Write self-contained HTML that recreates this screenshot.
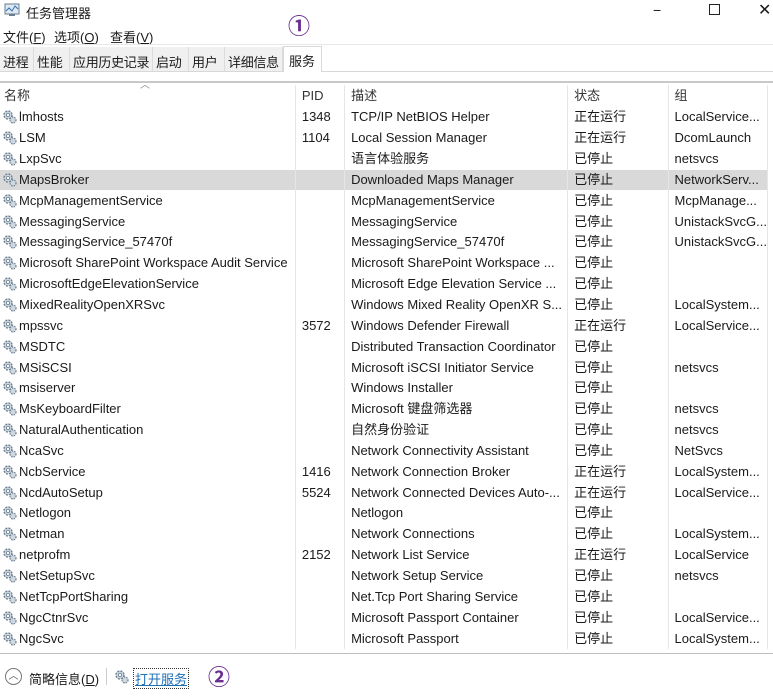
<!DOCTYPE html>
<html><head><meta charset="utf-8"><style>
*{margin:0;padding:0;box-sizing:border-box}
body{width:773px;height:697px;background:#fff;font-family:"Liberation Sans","Noto Sans CJK SC",sans-serif;font-size:13px;color:#1a1a1a;position:relative;overflow:hidden}
.abs{position:absolute;white-space:nowrap}
.tab{position:absolute;top:47px;height:24px;background:#f0f0f0;border-right:1px solid #dcdcdc;padding:5px 0 0 3px;font-size:13px;white-space:nowrap;overflow:hidden;letter-spacing:-0.3px}
table{position:absolute;top:85px;left:0;border-collapse:collapse;width:768px;table-layout:fixed}
td{height:20.85px;padding:0 0 0 6px;white-space:nowrap;overflow:hidden;border-right:1px solid #e6e6e6;line-height:20px}
tr.h td{height:22px;color:#333}
td.n{padding-left:2px;width:294px}
td.p{width:49px}td.d{width:222px}td.s{width:100px}td.g{width:99px;border-right:1px solid #e6e6e6}
tr.sel td{background:#d9d9d9}
.gear{display:inline-block;width:15px;height:15px;vertical-align:-3px;margin-right:2px}
</style></head><body>
<svg class="abs" style="left:4px;top:3px" width="16" height="14" viewBox="0 0 16 14"><rect x="1" y="1" width="14" height="10" fill="#dfe9f3" stroke="#6a7d90"/><polyline points="2,8 5,5 8,8 11,3 14,6" fill="none" stroke="#2e6fb0"/><rect x="5" y="11" width="6" height="2" fill="#6a7d90"/></svg>
<div class="abs" style="left:26px;top:3px;font-size:13px">任务管理器</div>
<div class="abs" style="left:653px;top:2px;font-size:14px">−</div>
<div class="abs" style="left:709px;top:4px;width:11px;height:11px;border:1px solid #222"></div>
<div class="abs" style="left:758px;top:0px;font-size:16px">✕</div>
<div class="abs" style="left:3px;top:27px">文件(<u>F</u>)</div>
<div class="abs" style="left:54px;top:27px">选项(<u>O</u>)</div>
<div class="abs" style="left:110px;top:27px">查看(<u>V</u>)</div>
<div class="abs" style="left:288px;top:9px;font-size:22px;color:#6a2c91;font-weight:bold">①</div>
<div class="abs" style="left:0;top:44px;width:773px;height:1px;background:#e8e8e8"></div>
<div class="abs" style="left:0;top:71px;width:773px;height:1px;background:#d8d8d8"></div>
<div class="tab" style="left:0;width:34px">进程</div>
<div class="tab" style="left:34px;width:36px">性能</div>
<div class="tab" style="left:70px;width:83px">应用历史记录</div>
<div class="tab" style="left:153px;width:36px">启动</div>
<div class="tab" style="left:189px;width:36px">用户</div>
<div class="tab" style="left:225px;width:58px">详细信息</div>
<div class="abs" style="left:283px;top:46px;width:39px;height:26px;background:#fff;border:1px solid #d8d8d8;border-bottom:none;padding:4px 0 0 5px">服务</div>
<div class="abs" style="left:0;top:81px;width:773px;height:2px;background:#c8c8c8"></div>
<div class="abs" style="left:140px;top:76px;font-size:10px;color:#888">︿</div>
<svg width="0" height="0" style="position:absolute"><defs><g id="g"><circle cx="6" cy="6" r="4" fill="#cfd8e0" stroke="#6c7f91" stroke-width="1.4" stroke-dasharray="2 1.2"/><circle cx="6" cy="6" r="1.6" fill="#fff" stroke="#6c7f91" stroke-width=".8"/><circle cx="11" cy="11" r="3" fill="#cfd8e0" stroke="#6c7f91" stroke-width="1.2" stroke-dasharray="1.5 1"/></g></defs></svg>
<table>
<tr class="h"><td class="n" style="padding-left:4px">名称</td><td class="p">PID</td><td class="d">描述</td><td class="s">状态</td><td class="g">组</td></tr>
<tr><td class="n"><svg class="gear"><use href="#g"/></svg>lmhosts</td><td class="p">1348</td><td class="d">TCP/IP NetBIOS Helper</td><td class="s">正在运行</td><td class="g">LocalService...</td></tr>
<tr><td class="n"><svg class="gear"><use href="#g"/></svg>LSM</td><td class="p">1104</td><td class="d">Local Session Manager</td><td class="s">正在运行</td><td class="g">DcomLaunch</td></tr>
<tr><td class="n"><svg class="gear"><use href="#g"/></svg>LxpSvc</td><td class="p"></td><td class="d">语言体验服务</td><td class="s">已停止</td><td class="g">netsvcs</td></tr>
<tr class="sel"><td class="n"><svg class="gear"><use href="#g"/></svg>MapsBroker</td><td class="p"></td><td class="d">Downloaded Maps Manager</td><td class="s">已停止</td><td class="g">NetworkServ...</td></tr>
<tr><td class="n"><svg class="gear"><use href="#g"/></svg>McpManagementService</td><td class="p"></td><td class="d">McpManagementService</td><td class="s">已停止</td><td class="g">McpManage...</td></tr>
<tr><td class="n"><svg class="gear"><use href="#g"/></svg>MessagingService</td><td class="p"></td><td class="d">MessagingService</td><td class="s">已停止</td><td class="g">UnistackSvcG...</td></tr>
<tr><td class="n"><svg class="gear"><use href="#g"/></svg>MessagingService_57470f</td><td class="p"></td><td class="d">MessagingService_57470f</td><td class="s">已停止</td><td class="g">UnistackSvcG...</td></tr>
<tr><td class="n"><svg class="gear"><use href="#g"/></svg>Microsoft SharePoint Workspace Audit Service</td><td class="p"></td><td class="d">Microsoft SharePoint Workspace ...</td><td class="s">已停止</td><td class="g"></td></tr>
<tr><td class="n"><svg class="gear"><use href="#g"/></svg>MicrosoftEdgeElevationService</td><td class="p"></td><td class="d">Microsoft Edge Elevation Service ...</td><td class="s">已停止</td><td class="g"></td></tr>
<tr><td class="n"><svg class="gear"><use href="#g"/></svg>MixedRealityOpenXRSvc</td><td class="p"></td><td class="d">Windows Mixed Reality OpenXR S...</td><td class="s">已停止</td><td class="g">LocalSystem...</td></tr>
<tr><td class="n"><svg class="gear"><use href="#g"/></svg>mpssvc</td><td class="p">3572</td><td class="d">Windows Defender Firewall</td><td class="s">正在运行</td><td class="g">LocalService...</td></tr>
<tr><td class="n"><svg class="gear"><use href="#g"/></svg>MSDTC</td><td class="p"></td><td class="d">Distributed Transaction Coordinator</td><td class="s">已停止</td><td class="g"></td></tr>
<tr><td class="n"><svg class="gear"><use href="#g"/></svg>MSiSCSI</td><td class="p"></td><td class="d">Microsoft iSCSI Initiator Service</td><td class="s">已停止</td><td class="g">netsvcs</td></tr>
<tr><td class="n"><svg class="gear"><use href="#g"/></svg>msiserver</td><td class="p"></td><td class="d">Windows Installer</td><td class="s">已停止</td><td class="g"></td></tr>
<tr><td class="n"><svg class="gear"><use href="#g"/></svg>MsKeyboardFilter</td><td class="p"></td><td class="d">Microsoft 键盘筛选器</td><td class="s">已停止</td><td class="g">netsvcs</td></tr>
<tr><td class="n"><svg class="gear"><use href="#g"/></svg>NaturalAuthentication</td><td class="p"></td><td class="d">自然身份验证</td><td class="s">已停止</td><td class="g">netsvcs</td></tr>
<tr><td class="n"><svg class="gear"><use href="#g"/></svg>NcaSvc</td><td class="p"></td><td class="d">Network Connectivity Assistant</td><td class="s">已停止</td><td class="g">NetSvcs</td></tr>
<tr><td class="n"><svg class="gear"><use href="#g"/></svg>NcbService</td><td class="p">1416</td><td class="d">Network Connection Broker</td><td class="s">正在运行</td><td class="g">LocalSystem...</td></tr>
<tr><td class="n"><svg class="gear"><use href="#g"/></svg>NcdAutoSetup</td><td class="p">5524</td><td class="d">Network Connected Devices Auto-...</td><td class="s">正在运行</td><td class="g">LocalService...</td></tr>
<tr><td class="n"><svg class="gear"><use href="#g"/></svg>Netlogon</td><td class="p"></td><td class="d">Netlogon</td><td class="s">已停止</td><td class="g"></td></tr>
<tr><td class="n"><svg class="gear"><use href="#g"/></svg>Netman</td><td class="p"></td><td class="d">Network Connections</td><td class="s">已停止</td><td class="g">LocalSystem...</td></tr>
<tr><td class="n"><svg class="gear"><use href="#g"/></svg>netprofm</td><td class="p">2152</td><td class="d">Network List Service</td><td class="s">正在运行</td><td class="g">LocalService</td></tr>
<tr><td class="n"><svg class="gear"><use href="#g"/></svg>NetSetupSvc</td><td class="p"></td><td class="d">Network Setup Service</td><td class="s">已停止</td><td class="g">netsvcs</td></tr>
<tr><td class="n"><svg class="gear"><use href="#g"/></svg>NetTcpPortSharing</td><td class="p"></td><td class="d">Net.Tcp Port Sharing Service</td><td class="s">已停止</td><td class="g"></td></tr>
<tr><td class="n"><svg class="gear"><use href="#g"/></svg>NgcCtnrSvc</td><td class="p"></td><td class="d">Microsoft Passport Container</td><td class="s">已停止</td><td class="g">LocalService...</td></tr>
<tr><td class="n"><svg class="gear"><use href="#g"/></svg>NgcSvc</td><td class="p"></td><td class="d">Microsoft Passport</td><td class="s">已停止</td><td class="g">LocalSystem...</td></tr>
</table>
<div class="abs" style="left:0;top:653px;width:773px;height:44px;background:#fff;border-top:1px solid #bdbdbd"></div>
<div class="abs" style="left:5px;top:668px;width:17px;height:17px;border:1px solid #777;border-radius:50%;font-size:10px;text-align:center;line-height:15px;color:#555">︿</div>
<div class="abs" style="left:29px;top:669px">简略信息(<u>D</u>)</div>
<div class="abs" style="left:106px;top:668px;width:1px;height:17px;background:#ccc"></div>
<svg class="gear abs" style="left:114px;top:669px"><use href="#g"/></svg>
<div class="abs" style="left:133px;top:668px;color:#1d6fb8;text-decoration:underline;border:1px dotted #333;padding:0 1px">打开服务</div>
<div class="abs" style="left:208px;top:660px;font-size:22px;color:#6a2c91;font-weight:bold">②</div>
</body></html>
